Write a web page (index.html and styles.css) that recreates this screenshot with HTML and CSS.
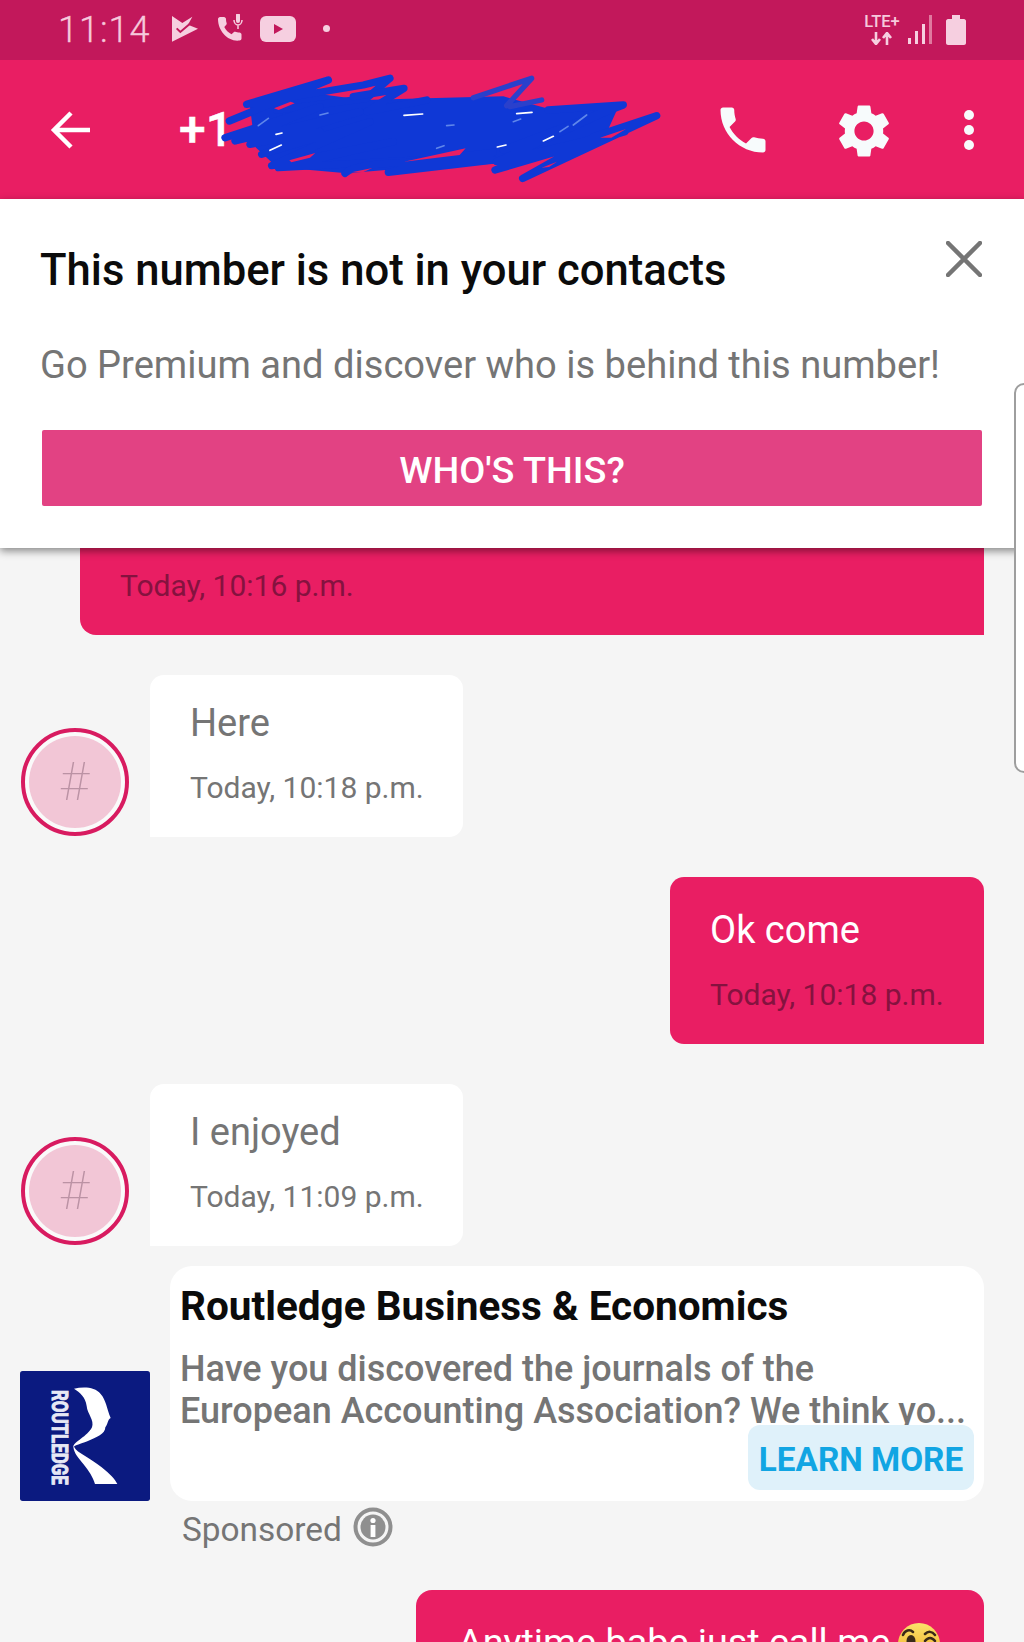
FILE: index.html
```html
<!DOCTYPE html>
<html lang="en">
<head>
<meta charset="utf-8">
<title>Conversation</title>
<link rel="stylesheet" href="styles.css">
</head>
<body>
<div class="screen">
  <div class="status">
    <div class="status-left">
      <span class="clock">11:14</span>
      <svg class="si si-flag" viewBox="37 33 78 78"><path class="sf" d="M37 33L68 54 98 35 85 59 115 71 37 110z"/><path class="notch" d="M51 70l11 11 28-24"/></svg>
      <svg class="si si-call" viewBox="0 0 28 30"><path class="sf" d="M1 5c0-1 1-2 2-2h4c1 0 2 1 2 2 0 2 .3 3 .7 4.300.1.6 0 1-.4 1.500l-2 2.200c1.600 3.200 4 5.500 7.200 7.200l2.200-2c.5-.4 1-.5 1.500-.4 1.300.4 2.500.7 4.300.7 1 0 2 1 2 2v4c0 1-1 2-2 2C11 28 1 17 1 5z"/><path class="sf" d="M19 1a2 2 0 0 1 4 0v6a2 2 0 0 1-4 0z"/><path class="ss" d="M17 6c0 3 2 5 4 5s4-2 4-5M21 11v4"/></svg>
      <svg class="si si-yt" viewBox="0 0 36 26"><rect class="sf" width="36" height="26" rx="6"/><path class="tube" d="M14 8l9 5-9 5z"/></svg>
      <span class="sdot"></span>
    </div>
    <div class="status-right">
      <div class="lte">
        <span class="lte-t">LTE+</span>
        <svg class="lte-a" viewBox="0 0 22 13"><path d="M5 0v11M1 7l4 5 4-5M16 13V2M12 6l4-5 4 5"/></svg>
      </div>
      <svg class="si si-sig" viewBox="0 0 26 30"><rect class="sf" x="0" y="23" width="3" height="6"/><rect class="sf" x="7" y="16" width="3" height="13"/><rect class="sf" x="14" y="9" width="3" height="20"/><rect class="dim" x="21" y="0" width="3" height="29"/></svg>
      <svg class="si si-bat" viewBox="0 0 20 30"><path class="sf" d="M6 0h8v4h4c1 0 2 1 2 2v22c0 1-1 2-2 2H2c-1 0-2-1-2-2V6c0-1 1-2 2-2h4z"/></svg>
    </div>
  </div>

  <div class="appbar">
    <svg class="ab-back" viewBox="0 0 42 40"><path d="M40 20H5M21 3L4 20l17 17"/></svg>
    <span class="number">+1</span>
    <div class="ab-actions">
      <svg class="ab-phone" viewBox="0 0 24 24"><path d="M6.620 10.790c1.440 2.830 3.760 5.140 6.590 6.590l2.200-2.200c.27-.27.67-.36 1.020-.24 1.120.37 2.330.57 3.570.57.55 0 1 .45 1 1V20c0 .55-.45 1-1 1-9.390 0-17-7.610-17-17 0-.55.45-1 1-1h3.500c.55 0 1 .45 1 1 0 1.250.2 2.450.57 3.570.11.35.03.74-.25 1.020l-2.200 2.200z"/></svg>
      <svg class="ab-gear" viewBox="0 0 24 24"><path fill-rule="evenodd" d="M19.140 12.940c.04-.3.06-.61.06-.94 0-.32-.02-.64-.07-.94l2.030-1.580c.18-.14.23-.41.12-.61l-1.920-3.320c-.12-.22-.37-.29-.59-.22l-2.390.96c-.5-.38-1.030-.7-1.620-.94l-.36-2.540c-.04-.24-.24-.41-.48-.41h-3.840c-.24 0-.43.17-.47.41l-.36 2.540c-.59.24-1.130.57-1.620.94l-2.390-.96c-.22-.08-.47 0-.59.22L2.740 8.870c-.12.21-.08.47.12.61l2.030 1.580c-.05.3-.09.63-.09.94s.02.64.07.94l-2.030 1.580c-.18.14-.23.41-.12.61l1.920 3.320c.12.22.37.29.59.22l2.390-.96c.5.38 1.030.7 1.620.94l.36 2.540c.05.24.24.41.48.41h3.840c.24 0 .44-.17.47-.41l.36-2.540c.59-.24 1.130-.56 1.620-.94l2.390.96c.22.08.47 0 .59-.22l1.920-3.320c.12-.22.07-.47-.12-.61l-2.010-1.580zM12 15.600c-1.980 0-3.600-1.620-3.600-3.600s1.620-3.600 3.600-3.600 3.600 1.620 3.600 3.600-1.620 3.600-3.600 3.600z"/></svg>
      <div class="ab-dots"><i></i><i></i><i></i></div>
    </div>
    <svg class="scribble" viewBox="0 0 1350 375">
      <path class="scr-core" d="M90 125L260 82 430 105 620 100 850 94 980 130 1200 115 1150 225 900 300 820 296 560 310 380 325 170 306 105 245z"/>
      <path class="scr-line" d="M28 168L325 45 80 118 430 60 510 40 440 100 170 135"/>
      <path class="scr-line" d="M400 95L552 70 440 140 620 105"/>
      <path class="scr-line" d="M15 218L300 125 45 228 420 140 90 238 300 200 125 268 450 170 155 302 520 230 175 308 600 285"/>
      <path class="scr-line" d="M375 325C400 300 480 295 560 292L820 262 505 322 820 285"/>
      <path class="scr-thin" d="M760 98L935 40 860 122M870 125L965 105"/>
      <path class="scr-line" d="M985 135L1210 120 850 255 1180 130 830 290 1215 200 825 315 1120 220 908 340 1310 152 1120 215"/>
      <path class="scr-gap" d="M162 130l50-20 12 5-48 20zM208 286l78-22-16 14-56 14zM552 290l185-40-18 20-130 16zM395 322l62-13-28 13zM1140 218l78-26-44 26zM965 308l46-18-24 16z"/>
      <path class="scr-hi" d="M115 182l30-22M650 250l22-8M880 170l22-8M1020 200l24-16M1060 180l40-30M300 150l24-6M680 182l22-2"/>
      <path class="scr-wh" d="M552 151l56-4M890 146l46-4M150 256l34-16M168 208l18-4M832 246l26-6M970 228l30-14"/>
    </svg>
  </div>

  <div class="notice">
    <div class="notice-head">
      <h1 class="notice-title">This number is not in your contacts</h1>
      <svg class="notice-x" viewBox="0 0 36 36"><path d="M2 2l32 32M34 2L2 34"/></svg>
    </div>
    <p class="notice-text">Go Premium and discover who is behind this number!</p>
    <div class="notice-btn">WHO'S THIS?</div>
  </div>

  <div class="thread">
    <div class="msg-cut"><span class="time-out">Today, 10:16 p.m.</span></div>

    <div class="row">
      <div class="avatar"><span class="avatar-in">#</span></div>
      <div class="bubble-in"><div class="text-in">Here</div><div class="time-in">Today, 10:18 p.m.</div></div>
    </div>

    <div class="bubble-out"><div class="text-out">Ok come</div><div class="time-out">Today, 10:18 p.m.</div></div>

    <div class="row">
      <div class="avatar"><span class="avatar-in">#</span></div>
      <div class="bubble-in"><div class="text-in">I enjoyed</div><div class="time-in">Today, 11:09 p.m.</div></div>
    </div>

    <div class="ad">
      <svg class="logo" viewBox="60 93 390 390">
        <rect class="logo-bg" x="60" y="93" width="390" height="390" rx="8"/>
        <path class="logo-r" d="M222 146C250 140 285 140 302 162 318 180 320 205 332 234 322 240 324 252 316 262 316 282 290 292 262 304 240 312 226 316 222 320 232 340 270 352 305 382 330 402 345 418 352 432H285C278 410 268 395 250 372 235 352 222 340 220 320 222 305 262 290 276 262 284 240 262 222 260 198 256 170 240 158 222 146z"/>
        <text class="logo-t" transform="translate(157 150) rotate(90)" textLength="284" lengthAdjust="spacingAndGlyphs">ROUTLEDGE</text>
      </svg>
      <div class="ad-body">
        <div class="ad-card">
          <div class="ad-title">Routledge Business &amp; Economics</div>
          <div class="ad-text">Have you discovered the journals of the<br>European Accounting Association? We think yo...</div>
          <div class="ad-cta">LEARN MORE</div>
        </div>
      </div>
    </div>
    <div class="sponsored">
      <span>Sponsored</span>
      <svg class="info" viewBox="0 0 40 40"><circle class="info-ring" cx="20" cy="20" r="17.500"/><circle class="info-disc" cx="20" cy="20" r="12.500"/><circle class="info-i" cx="20" cy="13.500" r="2.600"/><rect class="info-i" x="17.600" y="18" width="4.800" height="12"/></svg>
    </div>

    <div class="bubble-last">
      <span>Anytime babe just call me</span>
      <svg class="emoji" viewBox="0 0 42 42">
        <defs><linearGradient id="emg" x1="0" y1="0" x2="0" y2="1"><stop offset="0" stop-color="#fbe36a"/><stop offset="1" stop-color="#f0a31e"/></linearGradient></defs>
        <circle cx="21" cy="21" r="21" fill="url(#emg)"/>
        <path class="em-wink" d="M5 12c2-5 7-6 10-3M27 11c3-3 7-3 10 1M27 18c3-4 7-4 10 0"/>
        <ellipse class="em-eye" cx="13" cy="18" rx="4.500" ry="6"/>
      </svg>
    </div>
  </div>

  <div class="edge"></div>
</div>
</body>
</html>
```
FILE: styles.css
```css
* { box-sizing: border-box; }
html, body { margin: 0; padding: 0; }
body { background: #f5f5f5; font-family: Roboto, "Noto Sans", sans-serif; }
.screen {
  position: relative;
  width: 1024px;
  height: 1642px;
  overflow: hidden;
  display: flex;
  flex-direction: column;
  background: #f5f5f5;
}

/* status bar */
.status {
  height: 60px;
  flex: none;
  background: #c2185b;
  display: flex;
  align-items: center;
  justify-content: space-between;
  padding: 0 58px 0 58px;
  color: #f6c9dc;
}
.status-left, .status-right { display: flex; align-items: center; }
.clock { font-size: 36px; font-weight: 300; letter-spacing: 1px; width: 114px; margin-top: -1px; -webkit-text-stroke: .3px #f6c9dc; }
.si { display: block; flex: none; }
.sf { fill: #f6cfe0; }
.ss { fill: none; stroke: #f6cfe0; stroke-width: 1.500; }
.dim { fill: #e0799f; }
.tube { fill: #c2185b; }
.notch { fill: none; stroke: #c2185b; stroke-width: 6; }
.si-flag { width: 26px; height: 26px; margin-top: -3px; }
.si-call { width: 28px; height: 30px; margin: -2px 0 0 19px; }
.si-yt { width: 36px; height: 26px; margin: -2px 0 0 15px; }
.sdot { width: 7px; height: 7px; border-radius: 50%; background: #f6cfe0; margin: -4px 0 0 27px; }
.lte { display: flex; flex-direction: column; align-items: center; width: 36px; margin-top: -2px; line-height: 1; gap: 2px; }
.lte-t { font-size: 16.500px; font-weight: 500; line-height: 17px; }
.lte-a { width: 22px; height: 13px; fill: none; stroke: #f6cfe0; stroke-width: 2.600; }
.si-sig { width: 26px; height: 30px; margin: 0 0 0 8px; }
.si-bat { width: 20px; height: 30px; margin: 0 0 0 12px; }

/* app bar */
.appbar {
  position: relative;
  height: 139px;
  flex: none;
  background: #e91e63;
  display: flex;
  align-items: center;
  padding: 0 50px 0 50px;
  color: #fff;
}
.ab-back { width: 42px; height: 40px; flex: none; fill: none; stroke: #fff; stroke-width: 4.500; }
.number { font-size: 48px; font-weight: 500; margin-left: 87px; -webkit-text-stroke: .5px #fff; }
.ab-actions { margin-left: auto; display: flex; align-items: center; }
.ab-phone { width: 60px; height: 60px; fill: #f7fbfc; }
.ab-gear { width: 64px; height: 64px; fill: #f7fbfc; margin: 2px 0 0 59px; }
.ab-dots { display: flex; flex-direction: column; gap: 5px; margin-left: 68px; }
.ab-dots i { display: block; width: 10px; height: 10px; border-radius: 50%; background: #f7fbfc; }
.scribble { position: absolute; left: 220px; top: 5px; width: 450px; height: 125px; }
.scr-core { fill: #0f38d6; }
.scr-line { fill: none; stroke: #0f38d6; stroke-width: 22; stroke-linecap: round; stroke-linejoin: round; }
.scr-thin { fill: none; stroke: #2a40cc; stroke-width: 16; stroke-linecap: round; stroke-linejoin: round; }
.scr-gap { fill: #e91e63; }
.scr-hi { fill: none; stroke: #5f86ea; stroke-width: 5; stroke-linecap: round; }
.scr-wh { fill: none; stroke: #fff; stroke-width: 5; stroke-linecap: round; }

/* notice */
.notice {
  position: relative;
  z-index: 2;
  height: 349px;
  flex: none;
  background: #fff;
  padding: 44px 42px 0 40px;
  box-shadow: 0 3px 8px rgba(0, 0, 0, .45);
}
.notice-head { display: flex; justify-content: space-between; align-items: flex-start; }
.notice-title { margin: 0; font-size: 43.600px; font-weight: 500; line-height: 56px; color: #0b0b0b; white-space: nowrap; }
.notice-x { width: 36px; height: 36px; margin: -2px 0 0; fill: none; stroke: #757575; stroke-width: 4.500; stroke-linecap: round; }
.notice-text { margin: 41px 0 0; font-size: 38.100px; line-height: 50px; color: #757575; white-space: nowrap; }
.notice-btn {
  margin: 40px 0 0 2px;
  height: 76px;
  padding-top: 3px;
  background: #e24283;
  color: #fff;
  font-size: 37.800px;
  font-weight: 500;
  border-radius: 2px;
  display: flex;
  align-items: center;
  justify-content: center;
}

/* thread */
.thread {
  flex: 1;
  display: flex;
  flex-direction: column;
  padding: 0 40px 0 20px;
}
.msg-cut {
  height: 87px;
  margin-left: 60px;
  background: #e91e63;
  border-bottom-left-radius: 16px;
  padding: 20px 0 0 40px;
}
.time-out { font-size: 30px; line-height: 36px; color: #85123f; }
.row { display: flex; align-items: flex-end; gap: 21px; margin-top: 40px; padding-left: 1px; }
.avatar {
  width: 108px;
  height: 108px;
  flex: none;
  border-radius: 50%;
  border: 4px solid #d81b60;
  padding: 4px;
  background: #fafafa;
  margin-bottom: 1px;
}
.avatar-in {
  display: flex;
  align-items: center;
  justify-content: center;
  width: 100%;
  height: 100%;
  border-radius: 50%;
  background: #f2c6d6;
  color: #bb92a4;
  font-size: 53px;
  font-weight: 100;
  padding-right: 2px;
}
.bubble-in {
  width: 313px;
  height: 162px;
  background: #fff;
  border-radius: 14px 14px 14px 0;
  padding: 26px 0 0 40px;
}
.text-in, .text-out { font-size: 38px; line-height: 44px; }
.text-in { color: #757575; }
.time-in { font-size: 30px; line-height: 36px; color: #757575; margin-top: 25px; }
.bubble-out {
  align-self: flex-end;
  width: 314px;
  height: 167px;
  margin-top: 40px;
  background: #e91e63;
  border-radius: 14px 14px 0 14px;
  padding: 31px 0 0 40px;
}
.text-out { color: #fff; margin-bottom: 25px; }
.ad { display: flex; align-items: flex-end; gap: 20px; margin-top: 20px; }
.logo { width: 130px; height: 130px; flex: none; display: block; }
.logo-bg { fill: #0b1a80; }
.logo-r { fill: #fff; }
.logo-t { fill: #e6e8f5; stroke: #e6e8f5; stroke-width: 3; font-size: 66px; font-weight: 700; }
.ad-body { flex: 1; }
.ad-card {
  height: 235px;
  background: #fff;
  border-radius: 22px;
  padding: 14px 10px 0 10px;
}
.ad-title { font-size: 40.500px; font-weight: 700; line-height: 52px; color: #0b0b0b; white-space: nowrap; }
.ad-text { font-size: 36px; line-height: 42px; color: #757575; margin-top: 16px; white-space: nowrap; font-weight: 500; }
.ad-cta {
  width: 226px;
  height: 65px;
  margin: -7px 0 0 auto;
  padding-top: 3px;
  position: relative;
  background: #dff1fa;
  color: #11a5e3;
  font-size: 33.300px;
  font-weight: 700;
  border-radius: 12px;
  display: flex;
  align-items: center;
  justify-content: center;
}
.sponsored {
  display: flex;
  align-items: center;
  gap: 11px;
  margin: 9px 0 0 162px;
  font-size: 33.400px;
  line-height: 40px;
  color: #757575;
}
.info { width: 40px; height: 40px; flex: none; margin-top: -6px; }
.info-ring { fill: none; stroke: #8f8f8f; stroke-width: 4; }
.info-disc { fill: #8f8f8f; }
.info-i { fill: #fff; }
.bubble-last {
  align-self: flex-end;
  width: 568px;
  margin-top: 40px;
  height: 140px;
  flex: none;
  background: #e91e63;
  border-radius: 16px 16px 0 16px;
  padding: 30px 0 0 42px;
  color: #fff;
  font-size: 37.800px;
  line-height: 44px;
  display: flex;
  align-items: flex-start;
  gap: 8px;
}
.emoji { width: 42px; height: 42px; flex: none; margin-top: 3px; }
.em-eye { fill: #3a2a18; }
.em-wink { fill: none; stroke: #3a2a18; stroke-width: 2.500; stroke-linecap: round; }

/* scroll handle */
.edge {
  position: absolute;
  left: 1014px;
  top: 383px;
  width: 20px;
  height: 390px;
  border: 2px solid #9e9e9e;
  border-radius: 12px;
  background: #fff;
  z-index: 3;
}
```
